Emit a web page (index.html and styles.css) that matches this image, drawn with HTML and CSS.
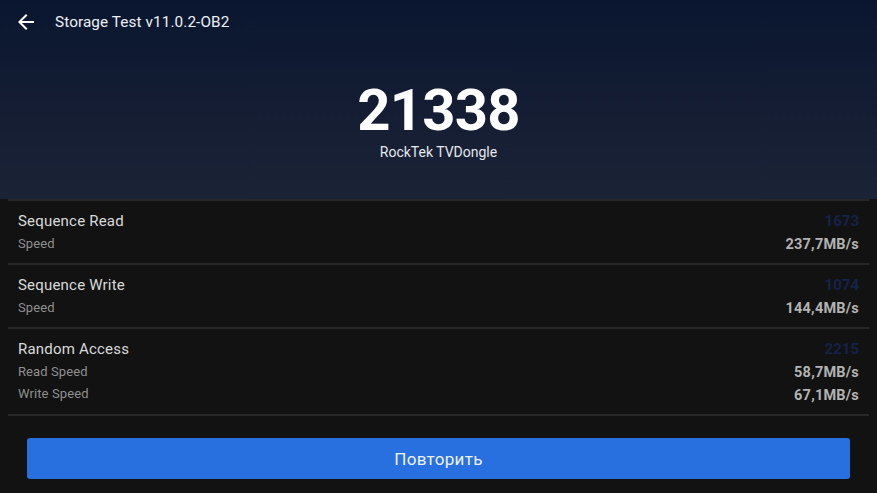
FILE: index.html
```html
<!DOCTYPE html>
<html lang="ru">
<head>
<meta charset="utf-8">
<title>Storage Test</title>
<link rel="stylesheet" href="styles.css">
</head>
<body>
<header class="hero">
  <div class="topbar">
    <svg class="back" width="24" height="24" viewBox="0 0 24 24"><path fill="#ffffff" d="M20 11H7.83l5.59-5.59L12 4l-8 8 8 8 1.41-1.41L7.83 13H20v-2z"/></svg>
    <span class="title">Storage Test v11.0.2-OB2</span>
  </div>
  <div class="score">21338</div>
  <div class="device">RockTek TVDongle</div>
</header>
<main class="list">
  <section class="row">
    <div class="left">
      <div class="name">Sequence Read</div>
      <div class="sub">Speed</div>
    </div>
    <div class="right">
      <div class="pts">1673</div>
      <div class="val">237,7MB/s</div>
    </div>
  </section>
  <section class="row">
    <div class="left">
      <div class="name">Sequence Write</div>
      <div class="sub">Speed</div>
    </div>
    <div class="right">
      <div class="pts">1074</div>
      <div class="val">144,4MB/s</div>
    </div>
  </section>
  <section class="row">
    <div class="left">
      <div class="name">Random Access</div>
      <div class="sub">Read Speed</div>
      <div class="sub">Write Speed</div>
    </div>
    <div class="right">
      <div class="pts">2215</div>
      <div class="val">58,7MB/s</div>
      <div class="val">67,1MB/s</div>
    </div>
  </section>
</main>
<div class="actions">
  <button class="retry">Повторить</button>
</div>
</body>
</html>
```
FILE: styles.css
```css
html, body {
  margin: 0;
  padding: 0;
}
body {
  width: 877px;
  height: 493px;
  overflow: hidden;
  background: #121212;
  font-family: Roboto, "Noto Sans", sans-serif;
  display: flex;
  flex-direction: column;
}
.hero {
  height: 199px;
  background: linear-gradient(180deg, #0a1630 0%, #141d33 55%, #1b2336 100%);
  display: flex;
  flex-direction: column;
  align-items: center;
  flex-shrink: 0;
}
.topbar {
  align-self: stretch;
  height: 44px;
  display: flex;
  align-items: center;
  padding-left: 14px;
}
.back {
  display: block;
  margin-top: -1px;
}
.title {
  margin-left: 17px;
  font-size: 15.3px;
  color: #eef0f4;
  letter-spacing: 0.1px;
}
.score {
  margin-top: 36px;
  font-size: 58px;
  line-height: 60px;
  font-weight: 700;
  letter-spacing: -0.8px;
  color: #ffffff;
}
.device {
  margin-top: 2px;
  font-size: 14px;
  line-height: 20px;
  color: #e6e8ec;
}
.list {
  margin: 0 8px;
  border-top: 2px solid #282828;
}
.row {
  display: flex;
  justify-content: space-between;
  padding: 9px 10px 7px 10px;
  border-bottom: 2px solid #282828;
}
.left .name {
  font-size: 15px;
  line-height: 23px;
  color: #dadada;
  letter-spacing: 0.2px;
}
.left .sub {
  font-size: 13px;
  line-height: 22px;
  color: #8f8f8f;
  letter-spacing: 0.1px;
}
.right {
  text-align: right;
}
.right .pts {
  font-size: 15px;
  line-height: 23px;
  font-weight: 700;
  color: #15224a;
}
.right .val {
  font-size: 14.5px;
  line-height: 23px;
  font-weight: 700;
  color: #b3b3b3;
  letter-spacing: 0.2px;
}
.actions {
  padding: 22px 27px 0 27px;
}
.retry {
  display: block;
  width: 100%;
  height: 41px;
  border: none;
  border-radius: 3px;
  background: #2870e0;
  color: #eef2fa;
  font-family: Roboto, "Noto Sans", sans-serif;
  font-size: 17px;
  letter-spacing: 0.3px;
  padding: 0;
}
```
